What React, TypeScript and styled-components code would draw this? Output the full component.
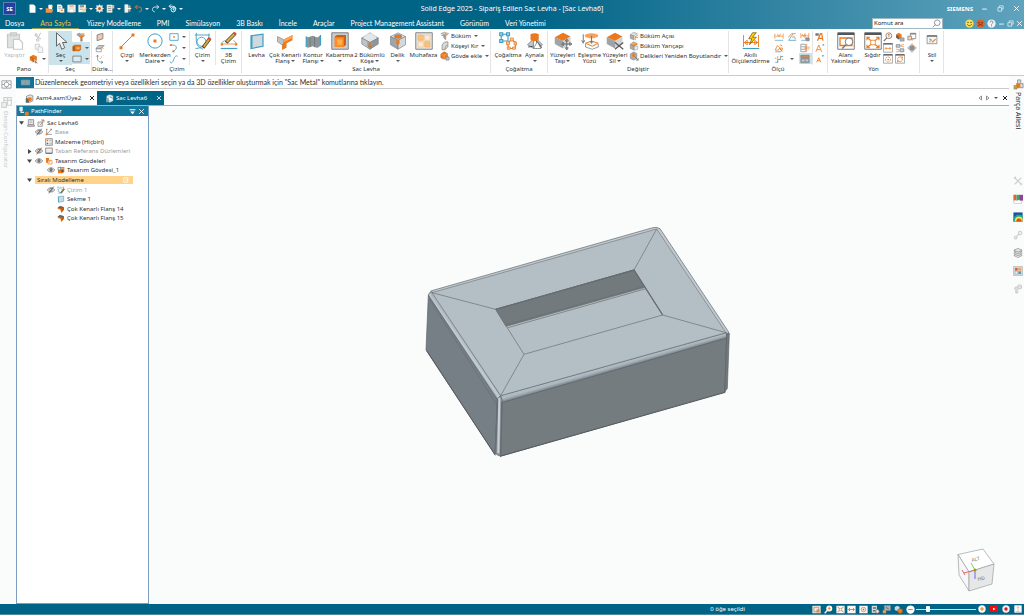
import React from 'react';
import styled, { createGlobalStyle, css } from 'styled-components';

const ink = '#2b2f33';
const teal = '#006487';
const orange = '#ec7a1c';
const sky = '#3d9fc4';
const grey = '#74797d';

const Global = createGlobalStyle`
  *, *::before, *::after { box-sizing: border-box; }
  body { margin: 0; background: #fff; }
  body, button, input { font-family: "Noto Sans", "Open Sans", sans-serif; font-size: 6px; line-height: 8px; color: ${ink}; }
  button { border: 0; padding: 0; background: none; }
  svg { display: block; flex: none; }
  ul { list-style: none; margin: 0; padding: 0; }
`;

/* ---------- icons ---------- */

const icons: Record<string, React.ReactNode> = {
  paste: <g fill="none" stroke="#c6c9cb" strokeWidth="1.6"><path d="M2 3h16v18H2z" fill="#dfe1e2" /><path d="M6 1h8v4H6z" fill="#d5d7d8" /><path d="M10 10h8l4 4v9H10z" fill="#fff" /></g>,
  cut: <g fill="none" stroke="#c6c9cb" strokeWidth="2.5"><path d="M3 8l14 9M16 2L8 17" /><circle cx="5" cy="7" r="2.500" /><circle cx="9" cy="19" r="3" /></g>,
  copy: <g fill="#f4f5f5" stroke="#c6c9cb" strokeWidth="2"><path d="M3 3h10v12H3z" /><path d="M10 9h8l3 3v11H10z" /></g>,
  formatPaint: <g><path d="M2 7l8-5 9 4v9l-8 5-9-5z" fill={orange} /><path d="M2 7l8 4v9" fill="none" stroke="#a34e0c" strokeWidth="1.5" /><path d="M13 13l9 9h-8z" fill="#777" stroke="#fff" /></g>,
  cursor: <path d="M6 1v18l4-4 3 8 4-2-3-7h6z" fill="#f2f3f3" stroke="#5d6468" strokeWidth="1.300" />,
  filter: <g><path d="M4 8h17l-6 6v8h-4v-8z" fill={orange} stroke={grey} /><path d="M2 4l6-2 4 2v5H2z" fill="#9fa4a7" /><path d="M12 3h8v5h-8z" fill="#f3a86a" /></g>,
  selBlock: <g><path d="M2 8l4-3h15v10l-3 4H2z" fill={orange} stroke="#a34e0c" /><path d="M2 8h5v11H2z" fill="#b25a14" /><path d="M11 10h7v5h-7z" fill="#ffb067" /></g>,
  selBox: <path d="M2 5h20v14H2z" fill="#d9eaf0" stroke={grey} strokeWidth="2" />,
  plane1: <path d="M5 7l14-4v13L5 21z" fill="#f0c9ae" stroke={grey} strokeWidth="2" />,
  plane2: <g><path d="M2 13l7-7h13l-7 7z" fill="#c7cbcd" stroke={grey} strokeWidth="1.5" /><path d="M3 14h12v7H3z" fill="#fff" stroke={grey} strokeWidth="1.5" /><path d="M15 9l5 5" stroke={orange} strokeWidth="2" /></g>,
  axes: <g fill="none" stroke={sky} strokeWidth="2"><path d="M6 3v8c0 6 4 9 13 9" /><path d="M3 6l3-3 3 3M15 17l4 3-4 3" stroke={grey} /><path d="M11 12l8-8" strokeDasharray="3 2" stroke={orange} /></g>,
  line: <g><path d="M4 20L20 4" stroke={sky} strokeWidth="1.3" /><path d="M2 19h4v4H2zM18 2h4v4h-4z" fill={orange} /></g>,
  circle: <g><circle cx="12" cy="12" r="9.5" fill="none" stroke={sky} strokeWidth="1.3" /><path d="M10 10h4v4h-4z" fill={orange} /></g>,
  rect: <g><path d="M2 4h20v16H2z" fill="none" stroke={sky} strokeWidth="2" /><path d="M10 10h4v4h-4z" fill={orange} /></g>,
  arc: <g><path d="M4 5c16-2 18 9 6 15" fill="none" stroke={sky} strokeWidth="2" /><path d="M2 3h5v4H2zM8 18h5v4H8z" fill={orange} /></g>,
  spline: <path d="M3 18c0 6 6 4 8-4S18 2 21 6" fill="none" stroke={sky} strokeWidth="2" />,
  sketch: <g fill="none"><path d="M3 1v10c0 7 4 10 9 12M1 4h20M20 2c0 11-7 20-18 20" stroke={sky} strokeWidth="1.2" /><circle cx="10" cy="13" r="6" stroke={sky} strokeWidth="1.2" /><path d="M12 21l9-12" stroke="#4e4437" strokeWidth="4.500" /><path d="M13 20l7-10" stroke="#d9ae3a" strokeWidth="2.500" /><path d="M20 10l2-2" stroke="#dd513c" strokeWidth="4" /></g>,
  sketch3d: <g fill="none"><path d="M2 15l4-4M22 15l-4-4" stroke={grey} /><path d="M3 16h18" stroke={orange} strokeWidth="1" /><path d="M1 22h22" stroke={sky} strokeWidth="1.600" /><path d="M1 15h3v3H1zM20 15h3v3h-3z" fill={orange} /><path d="M8 14L20 2" stroke="#4e4437" strokeWidth="5" /><path d="M9 13L19 3" stroke="#dcb143" strokeWidth="3" /><path d="M19 3l2-2" stroke="#dd513c" strokeWidth="4" /></g>,
  sheet: <g><path d="M4 5l16-2v16L4 22z" fill="#cfd8dc" stroke={sky} strokeWidth="1.6" /><path d="M4 5l2-1v16l-2 2z" fill={sky} /></g>,
  flange: <g><path d="M2 6l8 4 12-6v7l-8 4v6l-6 3v-7L2 13z" fill={orange} /><path d="M2 6l8 4v6l-2 1-6-4z" fill="#bfc4c7" stroke="#7f8487" strokeWidth=".7" /><path d="M10 10l12-6v4l-12 6z" fill="#ffa24f" /></g>,
  contour: <g><path d="M3 6c5 3 7-3 11 0 3 2 5 1 8-2v14c-3 3-5 4-8 2-4-3-6 3-11 0z" fill="#8e9599" /><path d="M3 6v14M22 4v14" stroke={sky} strokeWidth="1.6" /><path d="M8 7v13M14 6v14" stroke="#6b7175" /></g>,
  emboss: <g><path d="M1 1h22v22H1z" fill="#c9cccd" stroke={grey} strokeWidth="1.2" /><path d="M5 6l3-2h12v13l-3 3H5z" fill="#cc6110" /><path d="M5 7h12v13H5z" fill="#ff8d1f" /><path d="M8 10h7v7H8z" fill="#ffae5c" /></g>,
  corner: <g stroke={grey} strokeWidth=".8"><path d="M12 1l11 7-11 6L1 8z" fill="#e4e7e8" /><path d="M1 8l11 6v9L1 16z" fill="#bfc4c7" /><path d="M23 8l-11 6v9l11-7z" fill="#90979b" /><path d="M9 13l3 2 3-2v6l-3 2-3-2z" fill="#fff" /><path d="M10 15h4v5h-4z" fill={orange} /><path d="M4 6l7-4M20 6l-7-4" stroke="#fff" /></g>,
  hole: <g stroke={grey} strokeWidth=".8"><path d="M12 1l10 5-10 5L2 6z" fill="#e4e7e8" /><path d="M2 6l10 5v12L2 17z" fill="#9fa5a8" /><path d="M22 6l-10 5v12l10-6z" fill="#d5d8da" /><ellipse cx="12" cy="6" rx="5" ry="2.6" fill={orange} /><path d="M10 10l2 1 2-1v6l-2 1-2-1z" fill={orange} stroke="none" /></g>,
  housing: <g><path d="M1 1h22v22H1z" fill="#e4e6e7" stroke={grey} strokeWidth="1.2" /><path d="M4 4h7v7H4zM13 13h7v7h-7z" fill="#fbc27d" stroke="#f0b064" /><path d="M13 4h7v7h-7zM4 13h7v7H4z" fill="#ffe9cf" stroke="#eac699" /></g>,
  bend: <g><path d="M2 6l8-3 11 3-7 5z" fill="#c9cdcf" stroke={grey} /><path d="M14 11v10l-5-4V9z" fill="#9fa5a8" stroke={grey} /><path d="M3 10l8 2M12 5l5 6" stroke={orange} strokeWidth="2" /></g>,
  breakCorner: <g><path d="M5 21V10c3-7 7-8 14-8v12l-7 7z" fill="#d8dbdc" stroke={grey} strokeWidth="1.5" /><path d="M12 21c0-8 3-11 7-11" fill="none" stroke={orange} strokeWidth="2" /></g>,
  addBody: <g><path d="M2 7l8-5 8 4v9l-8 5-8-4z" fill={orange} stroke="#a34e0c" /><path d="M2 7l8 4 8-5M10 11v9" fill="none" stroke="#ffc48c" /><path d="M14 14h8v8h-8z" fill="#b9bdbf" stroke="#666" /></g>,
  pattern: <g fill="none" strokeWidth="1.5"><path d="M3 3h9v9H3z" stroke={sky} /><path d="M1 1h4v4H1zM10 1h4v4h-4zM1 10h4v4H1z" fill="#a8d5e5" stroke={sky} /><path d="M17 10l6 5-2 7h-8l-2-7z" stroke={orange} /><path d="M15 8h4v4h-4zM20 13h3v4h-3zM18 20h4v3h-4zM11 20h4v3h-4zM10 13h4v4h-4z" fill="#f9c8a5" stroke={orange} strokeWidth="1" /></g>,
  mirror: <g><path d="M2 17l8-8v13zM22 17l-8-8v13z" fill="#c2c6c8" stroke={grey} /><path d="M6 3c3-2 8-2 11 0v7c-3 3-8 3-11 0z" fill={orange} /><path d="M3 20l6-1M14 12l7 9" stroke="#4d5357" strokeWidth="1.5" /><path d="M10 22l5-9 5 9z" fill="#fff" stroke={grey} /></g>,
  moveFace: <g><path d="M12 1l10 5-10 6L1 7z" fill={orange} /><path d="M1 7l11 5v10L1 16z" fill="#9ea4a7" /><path d="M22 6l-10 6v10l10-6z" fill="#cfd3d5" /><path d="M17 10v13M11 16h12M17 9l-2 3h4zM17 24l-2-3h4zM10 16l3-2v4zM24 16l-3-2v4z" stroke="#555" fill="#fff" /></g>,
  matchFace: <g><ellipse cx="14" cy="5" rx="9" ry="3.5" fill="#f6a15e" /><path d="M6 15l8-3 9 3-8 4z" fill="#f2f3f3" stroke={orange} strokeWidth="1.3" /><path d="M6 16v4l9 3 8-3v-4" fill="none" stroke={grey} /><path d="M3 3v11M1 11l2 4 2-4M14 5v10M12 12l2 3 2-3" stroke="#777" fill="none" strokeWidth="1.300" /></g>,
  deleteFace: <g><path d="M12 1l10 5-10 6L1 7z" fill={orange} /><path d="M1 7l11 5v10L1 16z" fill="#9ea4a7" /><path d="M22 6l-10 6v10l10-6z" fill="#cfd3d5" /><path d="M12 14l11 9M23 14l-11 9" stroke="#555" strokeWidth="1.600" /></g>,
  bendAngle: <g><path d="M3 9l8-6 9 3-8 6z" fill="#dcdfe0" stroke={grey} /><path d="M3 9l9 3v9l-9-3z" fill="#a9aeb1" stroke={grey} /><path d="M22 9c-6 2-8 7-7 13M14 14l8 2" stroke={orange} strokeWidth="2" fill="none" /></g>,
  bendRadius: <g><path d="M3 8l8-6 9 4-8 6z" fill="#f6a763" stroke={grey} /><path d="M3 8l9 4v10l-9-4z" fill="#a9aeb1" stroke={grey} /><path d="M13 13h8v7l-8 2z" fill="#ecedee" stroke={grey} /><path d="M8 12l12-4" stroke={orange} strokeWidth="3" /></g>,
  holeResize: <g><path d="M3 7l8-5 8 4v12l-8 4-8-4z" fill="#a9aeb1" stroke={grey} /><path d="M8 6h6v8H8z" fill={orange} /><path d="M14 14l8 8M17 22h5v-5" stroke="#555" fill="none" strokeWidth="1.500" /></g>,
  smartDim: <g fill="none"><path d="M2 4v16M22 4v16M3 14h18M3 14l4-3v6zM21 14l-4-3v6z" stroke={orange} strokeWidth="1.2" /><path d="M1 22h22" stroke={sky} strokeWidth="1.500" /><path d="M14 1L9 9h4l-3 8 9-10h-5l5-6z" fill="#ffd200" stroke="#70561b" /></g>,
  dim: <g fill="none" stroke={orange} strokeWidth="1.600"><path d="M2 4v12M22 4v12M3 10h18M8 5l4 6 4-7" /><path d="M2 20h20" stroke={sky} /></g>,
  dimAngle: <g fill="none" strokeWidth="1.800"><path d="M14 5L4 20h18" stroke={sky} /><path d="M3 13l8-9h10M16 10c3 2 4 5 4 8M12 12h6" stroke={orange} /></g>,
  dimChain: <g fill="none" strokeWidth="1.600"><path d="M2 3v12M12 3v12M21 3v10M3 9h18M5 5l4 6 3-6" stroke={orange} /><path d="M3 20h10" stroke={sky} /><path d="M14 14h8v7h-8z" fill="#999" stroke={grey} /></g>,
  dimSym: <g fill="none" strokeWidth="1.800"><path d="M3 17l5-11 6 5-3 6zM14 4l6 3" stroke={orange} /><path d="M3 21h15M13 13l7 7" stroke={sky} /><path d="M16 12h4v5h-4z" stroke={orange} /></g>,
  dimCoord: <g fill="none" strokeWidth="1.800"><path d="M3 20h6v-7h7V6h6" stroke={sky} /><path d="M2 10h7M9 5v17M13 13h9M16 4v6" stroke={orange} strokeDasharray="4 2" /></g>,
  dimAlign: <g fill="none" strokeWidth="1.600"><path d="M2 3h12v18H2zM3 9h10M3 15h10" stroke={grey} /><path d="M16 3v18M19 8l4 4-4 4M10 12h10" stroke={orange} /></g>,
  dimAuto: <g fill="#a3a8ab" stroke={grey} strokeWidth="1.600"><path d="M2 3h20v6H2z" fill="#cf8a5c" /><path d="M2 11h20v10H2z" /><path d="M5 15h4M15 15h4" stroke="#fff" /><path d="M12 18h3" stroke={orange} /></g>,
  fontA: <g><path d="M1 3h8v6H1z" fill="#777" /><path d="M6 21L13 4h3l3 17M9 15h9" fill="none" stroke={orange} strokeWidth="3" /></g>,
  fontUp: <g><path d="M2 21L9 5l7 16M5 16h8" fill="none" stroke={orange} strokeWidth="2" /><path d="M17 6l3-4 3 4z" fill={sky} /></g>,
  fontDown: <g><path d="M4 20L9 9l5 11M6 16h6" fill="none" stroke={orange} strokeWidth="2" /><path d="M16 3l3 4 3-4z" fill={sky} /></g>,
  zoomArea: <g fill="none"><path d="M1 1h22v22H1z" stroke={grey} fill="#fff" strokeWidth="1.3" /><path d="M1 1h22v3H1z" fill="#505659" /><path d="M4 8h16v10H4z" stroke={orange} strokeWidth="1.800" /><circle cx="16" cy="13" r="5" fill="#fff" stroke={grey} strokeWidth="1.3" /><path d="M12 17l-5 5" stroke={grey} strokeWidth="2" /></g>,
  fit: <g fill="none"><path d="M1 1h22v22H1z" stroke={grey} fill="#fff" strokeWidth="1.3" /><path d="M1 1h22v3H1z" fill="#505659" /><path d="M4 7l16 14M20 7L4 21M4 11V7h4M16 7h4v4M20 17v4h-4M8 21H4v-4" stroke={orange} strokeWidth="1.500" /><path d="M9 11h6v6H9z" stroke={orange} fill="#fff" /></g>,
  zoom: <g fill="#fff"><circle cx="14" cy="9" r="7" stroke={grey} strokeWidth="2" /><path d="M9 14l-7 8" stroke={grey} strokeWidth="3" /><path d="M14 5v8M12 8l2-3 2 3" stroke={orange} fill="none" strokeWidth="2" /></g>,
  orbit: <g><path d="M3 6l6-4 7 4v8l-7 4-6-4z" fill={orange} /><path d="M3 6l6 4v8l-6-4z" fill="#5a6063" /><path d="M12 14h10v8H12z" fill="#aaafb2" stroke={grey} /></g>,
  views: <g><path d="M8 3h13v13H8z" fill="#fff" stroke={grey} strokeWidth="1.600" /><path d="M8 3h13v3H8z" fill={grey} /><path d="M2 10h9v9H2z" fill="#fbd4b2" stroke={grey} strokeWidth="1.600" /><path d="M12 20l6-5" stroke={orange} strokeWidth="2" /></g>,
  pan: <g fill="none" strokeWidth="1.800"><path d="M1 2h22v20H1z" stroke="#8b9093" fill="#fff" /><path d="M1 2h22" stroke="#505659" strokeWidth="3" /><path d="M5 13h14M8 10l-3 3 3 3M16 10l3 3-3 3" stroke={orange} /></g>,
  spin: <g fill="none" strokeWidth="1.800"><path d="M3 4h9v6H3zM12 14h9v7h-9z" fill="#d5d8da" stroke={grey} /><path d="M21 4c-9 0-9 5 0 5M3 15c10 0 10 6 0 6" stroke={orange} /></g>,
  look: <g fill="#c9cdcf" stroke="#8b9093"><path d="M12 1l4 5H8zM12 23l4-5H8zM1 12l5-4v8zM23 12l-5-4v8z" /><path d="M7 7h10v10H7z" fill="#8d9397" /><path d="M12 8h4v4h-4z" fill={orange} /></g>,
  winTarget: <g fill="none" strokeWidth="1.800"><path d="M1 2h22v20H1z" stroke="#8b9093" fill="#fff" /><path d="M1 2h22" stroke="#505659" strokeWidth="3" /><circle cx="12" cy="13" r="6" stroke={orange} strokeDasharray="5 2" /><path d="M11 12h3v3h-3z" fill={orange} /></g>,
  winRefresh: <g fill="none" strokeWidth="1.800"><path d="M1 2h22v20H1z" stroke="#8b9093" fill="#fff" /><path d="M1 2h22" stroke="#505659" strokeWidth="3" /><path d="M6 13c0-6 8-8 12-4M18 12c0 7-8 8-12 4M18 6v4h-4M6 20v-4h4" stroke={orange} /></g>,
  style: <g fill="none" strokeWidth="1.5"><path d="M1 3h22v18H1z" fill="#f3f4f4" stroke={grey} /><path d="M1 4h22" stroke="#666" strokeWidth="3" /><path d="M6 10l5 3-5 4" stroke="#555" /><path d="M12 18l8-7" stroke={orange} strokeWidth="2.5" /></g>,

  docNew: <path d="M4 1h11l5 5v17H4z" fill="#fff" />,
  open: <g><path d="M9 2h10v12H9z" fill="#fff" /><path d="M2 11h8l3 3h9l-3 9H2z" fill="#f6914a" /><path d="M14 7l7-4-1 7" fill="#ffc69b" /></g>,
  page: <g><path d="M3 1h10l4 4v16H3z" fill="#fff" /><path d="M6 7h8M6 11h6" stroke="#888" strokeWidth="2" /><path d="M10 12h12v11H10z" fill="#fff" stroke="#a58c78" /><path d="M13 15h5v4h-5z" fill={orange} /></g>,
  save: <g><path d="M1 2h22v20H1z" fill="#f4efe9" /><path d="M6 2h12v7H6z" fill="#eebf99" /><path d="M6 13h12v9H6z" fill="#fff" stroke="#b9a797" /></g>,
  saveAs: <g><path d="M1 2h20v20H1z" fill="#f4efe9" /><path d="M5 3h11v6H5z" fill="#9c9287" /><path d="M5 14h9" stroke="#9c9287" strokeWidth="2" /><path d="M13 21l9-11" stroke="#ffc46a" strokeWidth="4" /></g>,
  gear: <g><circle cx="12" cy="12" r="6" fill="none" stroke="#fbe9da" strokeWidth="5" /><path d="M12 1v22M1 12h22M4 4l16 16M20 4L4 20" stroke="#fbe9da" strokeWidth="3" /><circle cx="12" cy="12" r="4" fill="#a7622e" /></g>,
  sheetList: <g><path d="M2 2h15v21H2z" fill="#efeae4" /><path d="M5 7h9M5 12h9M5 17h9" stroke="#8b8177" strokeWidth="2" /><path d="M16 3h6v9h-6z" fill="#d9bfa8" /></g>,
  exit: <g><path d="M4 1h10v22H4z" fill="#f4efe9" /><path d="M14 4h6v16h-6z" fill="#bba999" /><path d="M10 12h12" stroke="#fff" strokeWidth="3" /></g>,
  undo: <path d="M9 3L3 8l6 5M4 8h9c10 0 9 12 1 13" fill="none" stroke="#a8703f" strokeWidth="3" />,
  redo: <path d="M15 3l6 5-6 5M20 8h-9c-10 0-9 12-1 13" fill="none" stroke="#d9e9ef" strokeWidth="2.500" />,
  history: <g fill="none" stroke="#f0f7fa" strokeWidth="2.5"><path d="M8 1L3 6l5 5M4 6h8c6 0 9 3 9 8" /><circle cx="14" cy="15" r="6" /><path d="M14 11v5h4" /></g>,
  minimize: <path d="M4 14h16" stroke="#fff" strokeWidth="3" />,
  restore: <g fill="none" stroke="#fff" strokeWidth="2.2"><path d="M8 8V3h13v11h-5" /><path d="M3 9h13v12H3z" /></g>,
  closeW: <path d="M4 4l16 16M20 4L4 20" stroke="#fff" strokeWidth="3" />,
  closeD: <path d="M4 4l16 16M20 4L4 20" stroke="#222" strokeWidth="4" />,
  search: <g fill="none" stroke="#777" strokeWidth="2"><circle cx="14" cy="10" r="7.5" /><path d="M9 15l-7 7" /></g>,
  smile: <g><circle cx="12" cy="12" r="11" fill="#f8dc55" /><circle cx="8" cy="9" r="1.8" fill="#58470e" /><circle cx="16" cy="9" r="1.8" fill="#58470e" /><path d="M6 14c3 5 9 5 12 0" fill="none" stroke="#58470e" strokeWidth="2" /></g>,
  frown: <g><circle cx="12" cy="12" r="11" fill="#d9632f" /><circle cx="8" cy="10" r="1.8" fill="#4e1b08" /><circle cx="16" cy="10" r="1.8" fill="#4e1b08" /><path d="M6 18c3-4 9-4 12 0" fill="none" stroke="#4e1b08" strokeWidth="2" /></g>,
  help: <g><circle cx="12" cy="12" r="11" fill="#eef4f6" /><path d="M8 9c0-5 8-5 8 0 0 3-4 3-4 6M12 17v3" fill="none" stroke="#6a8c9a" strokeWidth="2.5" /></g>,

  keyboard: <g><path d="M2 6h20v12H2z" fill="#7c9aa5" /><path d="M4 9h16M4 12h16M4 15h16" stroke="#aac0c8" strokeDasharray="2 1" /></g>,
  asm: <g><path d="M4 6l10-4 7 3v13l-8 4-9-3z" fill="#e9eaeb" stroke="#555" strokeWidth="1.5" /><path d="M2 11h6l3 3v9H2z" fill="#666" /><path d="M9 8h9v9l-6 2H9z" fill={orange} /><path d="M10 8l8-1v5z" fill="#ffbf7c" /></g>,
  part: <g><path d="M5 5l8-3 8 3v13l-8 4-8-4z" fill="#d5e2e7" stroke="#fff" /><path d="M3 11h8v11H3z" fill="#7fa2b0" /><path d="M10 9h8v7h-8z" fill="#fff" /><path d="M13 8l7 3" stroke="#4c7585" strokeWidth="2" /></g>,
  pathfinder: <g><path d="M1 2h8v10H1z" fill="#e5ecef" /><path d="M5 12v3h7" stroke="#e5ecef" strokeWidth="3" fill="none" /><path d="M14 14h9v9h-9z" fill={orange} /></g>,
  pin: <g fill="#fff"><path d="M2 4h20v4H2zM4 12h16l-8 9z" /></g>,
  calc: <g fill="#fff" stroke="#666" strokeWidth="2"><path d="M4 2h16v14H4zM2 18h20v4H2z" /><path d="M7 6h10M7 10h10" strokeWidth="1.5" /></g>,
  sheetPart: <g fill="none" stroke="#777" strokeWidth="2"><path d="M3 9h13v13H3z" fill="#f5f5f5" /><path d="M12 3h9v7M8 14l3 3 8-12" /><path d="M16 5l4-2" stroke={orange} strokeWidth="3" /></g>,
  eye: <g fill="none" stroke="#555" strokeWidth="2"><path d="M1 12c6-9 16-9 22 0-6 8-16 8-22 0z" /><circle cx="12" cy="11.5" r="4" fill="#888" /></g>,
  eyeOff: <g fill="none" stroke="#555" strokeWidth="2"><path d="M1 12c6-9 16-9 22 0-6 8-16 8-22 0z" /><circle cx="12" cy="11.5" r="4" /><path d="M5 22L20 2" strokeWidth="2.5" /></g>,
  base: <g fill="none" stroke="#777" strokeWidth="2"><path d="M5 3v16h16M5 19L19 4" /><path d="M2 17h5v5H2zM16 2h5v5h-5zM3 2h4v4H3z" fill={orange} stroke="none" /></g>,
  material: <g><path d="M2 2h20v20H2z" fill="#fff" stroke="#666" strokeWidth="2" /><path d="M5 5h5v5H5z" fill={orange} /><path d="M5 14h5v5H5z" fill="#666" /><path d="M13 6h7M13 9h7M13 15h7M13 18h7" stroke="#777" strokeWidth="1.5" /></g>,
  refPlane: <g><path d="M2 3h20v15H2z" fill="#eee" stroke="#666" strokeWidth="2" /><path d="M2 18h20v3H2z" fill="#777" /></g>,
  bodies: <g><path d="M3 3h9v6h6v8H3z" fill={orange} /><path d="M9 10h12v11H9z" fill="#fff" stroke={orange} strokeWidth="2" /><path d="M11 12h5v5h-5z" fill="#f6a763" /></g>,
  body: <g><path d="M3 6l5-3h14v14l-4 5H3z" fill={orange} /><path d="M3 4h8v8H3z" fill="#fff" stroke="#45758b" strokeWidth="2" /><path d="M13 12h6v6h-6z" fill="#4e545a" /><path d="M12 5h8v4h-8z" fill="#f6a763" /></g>,
  flangeDark: <g><path d="M2 8l7-5 12 4v7l-8 9-3-9-8-2z" fill={orange} /><path d="M2 8l7-5 12 4-8 4z" fill="#5f6467" /><path d="M13 11l8-4v7l-8 9z" fill="#c8590b" /></g>,

  tools: <g fill="none" stroke="#cdd0d1" strokeWidth="3"><path d="M4 4l16 16M20 4L4 20" /><path d="M2 6l5-4M18 22l4-4" /></g>,
  weather: <g><path d="M0 2h8v14H0z" fill="#f3a43f" /><path d="M3 2h4v14H3z" fill="#e4572e" /><path d="M8 2h8v14H8z" fill="#4d9e69" /><path d="M15 2h9v14h-9z" fill="#8a4695" /><path d="M1 21c0-6 6-8 8-5 4-4 11-1 10 3 4 1 2 4 0 4H5z" fill="#fff" stroke="#999" /></g>,
  rainbow: <g><path d="M1 1h22v22H1z" fill="#15549a" /><path d="M1 23C1 6 12 3 23 8v15z" fill="#15a8a0" /><path d="M4 23c0-14 15-16 19-7v7z" fill="#f5e134" /><path d="M8 23c0-10 12-10 13 0z" fill="#e4462b" /></g>,
  wrench: <g fill="none" stroke="#cdd0d1" strokeWidth="3"><path d="M8 16l7-7" /><circle cx="17" cy="7" r="4" /><circle cx="6" cy="18" r="3" /></g>,
  layers: <g fill="#e2e4e5" stroke="#777" strokeWidth="1.3"><path d="M12 13l10 5-10 5-10-5z" /><path d="M12 9l10 4.500-10 5-10-5z" /><path d="M12 5l10 4-10 5L2 9z" /><path d="M12 1l10 4-10 5L2 5z" /></g>,
  palette: <g><path d="M1 1h22v22H1z" fill="#cfd2d4" stroke="#999" /><path d="M5 5h6v6H5z" fill="#e4572e" /><path d="M13 5h6v6h-6z" fill="#f2a53a" /><path d="M5 13h6v6H5z" fill="#eee" stroke="#999" /><path d="M13 13h6v6h-6z" fill="#3e9dc9" /></g>,
  gears: <g fill="#e0e2e3" stroke="#c2c5c6" strokeWidth="2"><circle cx="16" cy="7" r="5" /><circle cx="8" cy="11" r="4" /><circle cx="9" cy="19" r="3" /></g>,
  family: <g><path d="M10 2h7v8h5v9H10z" fill="#ddd" stroke="#777" strokeWidth="1.500" /><path d="M7 9h9v10H7z" fill={orange} /><path d="M2 14h7v8H2z" fill="#c9a03c" stroke="#777" /></g>,
  config: <g fill="none" stroke="#9b9fa1" strokeWidth="2"><path d="M2 4h20v16H2zM2 12h20M12 4v16" /><circle cx="12" cy="12" r="5" fill="#fff" /></g>,
  configPale: <g fill="none" stroke="#cfd2d3" strokeWidth="2"><path d="M7 3h14v14H7zM7 8h14M14 3v14" /><path d="M3 12h9v9H3z" fill="#eee" /></g>,

  sFrame: <g><path d="M1 2h22v20H1z" fill="#f7e6d9" /><path d="M5 6h13v12H5z" fill="none" stroke="#9a8b80" strokeWidth="2" /><path d="M12 12h8v8h-8z" fill="#d9895a" /></g>,
  sZoom: <g fill="#fff"><circle cx="14" cy="9" r="8" /><path d="M9 14l-7 8" stroke="#f7e6d9" strokeWidth="4" /><path d="M14 4v10M10 9h8" stroke={orange} strokeWidth="2" /></g>,
  sFit: <g><path d="M1 2h22v20H1z" fill="#fdf6f0" /><path d="M4 5l16 14M20 5L4 19" stroke={orange} strokeWidth="2.5" /><path d="M9 9h6v6H9z" fill="#fff" stroke={grey} /></g>,
  sPan: <g><path d="M1 2h22v20H1z" fill="#fdf6f0" /><path d="M4 12h16M8 8l-4 4 4 4M16 8l4 4-4 4" stroke={orange} strokeWidth="2.500" fill="none" /></g>,
  sSpin: <g><path d="M1 2h22v20H1z" fill="#fdf6f0" /><circle cx="12" cy="12" r="6" fill="none" stroke={orange} strokeWidth="2" /><path d="M10 10h4v4h-4z" fill={grey} /></g>,
  sCube: <g><path d="M2 2h14v19H2z" fill="#d8dee0" /><path d="M5 6h9v4H5zM5 13h6v4H5z" fill="#58707b" /><circle cx="17" cy="17" r="5" fill="#f0e4da" stroke="#666" strokeWidth="2" /></g>,
  sBrush: <g><path d="M6 1h17v14H6z" fill="#a9b3b8" stroke="#777" /><path d="M2 14h9v8H2z" fill="#e59a56" /><path d="M10 6l8 5" stroke="#777" strokeWidth="3" /></g>,
  sBlocks: <g><path d="M2 5l7-3 6 3v8l-6 3-7-3z" fill="#bfe0ea" /><path d="M10 12l6-3 7 3v7l-7 4-6-4z" fill={orange} stroke="#77431b" /></g>,
  sMinus: <g><circle cx="12" cy="12" r="11" fill="#fff" /><path d="M6 12h12" stroke={orange} strokeWidth="3" /></g>,
  sPlus: <g><circle cx="12" cy="12" r="11" fill="#fff" /><path d="M6 12h12M12 6v12" stroke={orange} strokeWidth="3" /></g>,
  youtube: <g><path d="M0 3h24v18H0z" fill="#f00d0d" /><path d="M9 8l8 4-8 4z" fill="#fff" /></g>,
  record: <g><circle cx="12" cy="12" r="11" fill="#f2eeee" /><circle cx="12" cy="12" r="5" fill="#e1121d" /></g>,
  upload: <g><path d="M1 1h22v22H1z" fill="#fff" /><path d="M12 20V5M7 10l5-5 5 5M5 20h14" stroke="#f39a96" strokeWidth="2" fill="none" /></g>,
};

const Icon = ({ name, size = 10 }: { name: string; size?: number }) => (
  <svg width={size} height={size} viewBox="0 0 24 24" aria-hidden="true">{icons[name]}</svg>
);

const Caret = styled.i<{ $light?: boolean }>`
  display: inline-block;
  flex: none;
  width: 4px;
  height: 2px;
  vertical-align: middle;
  border: solid transparent;
  border-width: 2px 2px 0;
  border-top-color: ${(p) => (p.$light ? '#fff' : '#55595c')};
`;

/* ---------- frame ---------- */

const Page = styled.div`
  display: flex;
  flex-direction: column;
  min-height: 100vh;
  overflow: hidden;
`;

const Header = styled.header`
  background: linear-gradient(90deg, ${teal} 0%, ${teal} 52%, #2a7f9e 72%, #5fa3bd 100%);
  color: #fff;
`;

const TitleRow = styled.div`
  display: grid;
  grid-template-columns: 1fr auto 1fr;
  align-items: center;
  height: 17px;
`;

const QuickBar = styled.div`
  display: flex;
  align-items: center;
  padding-left: 3px;
`;

const Logo = styled.span`
  width: 13px;
  height: 13px;
  margin-right: 12px;
  background: #27409b;
  border: 1px solid #5d7fc0;
  color: #fff;
  font-weight: 700;
  line-height: 12px;
  text-align: center;
`;

const QuickButton = styled.button<{ $wide?: boolean }>`
  display: flex;
  align-items: center;
  gap: 2px;
  width: ${(p) => (p.$wide ? 17 : 11)}px;
`;

const DocTitle = styled.h1`
  margin: 0;
  font-size: 7px;
  font-weight: 400;
  line-height: 17px;
`;

const WindowButtons = styled.div`
  display: flex;
  align-items: center;
  justify-content: flex-end;
  gap: 8px;
  padding-right: 4px;
  button + button { margin-left: 1px; }
`;

const Brand = styled.strong`
  font-size: 6px;
`;

const MenuRow = styled.div`
  display: flex;
  justify-content: space-between;
  height: 12px;
`;

const Menu = styled.nav`
  display: flex;
`;

const MenuItem = styled.a<{ $active?: boolean }>`
  padding: 0 8px;
  font-family: Lato, "Noto Sans", sans-serif;
  font-size: 7px;
  line-height: 13px;
  color: ${(p) => (p.$active ? '#e9c63f' : '#fff')};
  text-decoration: none;
  white-space: nowrap;
  ${(p) => p.$active && css`border-bottom: 1px solid #93a04f;`}
  &:first-child { padding-left: 5px; }
`;

const MenuTools = styled.div`
  display: flex;
  align-items: center;
  gap: 2px;
  padding-right: 1px;
`;

const Search = styled.label`
  display: flex;
  align-items: center;
  width: 71px;
  height: 11px;
  margin-right: 20px;
  padding: 0 1px;
  background: #fff;
  border: 1px solid #9fb9c4;
  input { flex: 1; min-width: 0; border: 0; padding: 0; outline: 0; background: none; }
  input::placeholder { color: #222; opacity: 1; }
`;

/* ---------- ribbon ---------- */

const Ribbon = styled.div`
  display: flex;
  height: 47px;
  padding: 2px 0;
  background: #fff;
  border-bottom: 1px solid #c9cbcc;
`;

const GroupBox = styled.section<{ $w: number }>`
  display: flex;
  flex: none;
  flex-direction: column;
  width: ${(p) => p.$w}px;
  border-right: 1px solid #e2e4e5;
`;

const GroupRow = styled.div`
  display: flex;
  height: 34px;
`;

const GroupLabel = styled.h2`
  margin: 0;
  font-size: 6px;
  font-weight: 400;
  line-height: 8px;
  text-align: center;
  white-space: nowrap;
`;

const Group = ({ w, label, children }: { w: number; label?: string; children: React.ReactNode }) => (
  <GroupBox $w={w}>
    <GroupRow>{children}</GroupRow>
    {label && <GroupLabel>{label}</GroupLabel>}
  </GroupBox>
);

const BigButton = styled.button<{ $w: number; $on?: boolean; $off?: boolean; $edge?: boolean }>`
  display: flex;
  flex: none;
  flex-direction: column;
  align-items: center;
  width: ${(p) => p.$w}px;
  padding-top: 1px;
  gap: 2px;
  line-height: 6px;
  white-space: nowrap;
  background: ${(p) => (p.$on ? '#cbe3ea' : 'none')};
  color: ${(p) => (p.$off ? '#b4b7b9' : ink)};
  border-left: ${(p) => (p.$edge ? '1px solid #e2e4e5' : '0')};
  span { display: flex; flex-direction: column; align-items: center; width: 0; }
  em { display: flex; align-items: center; gap: 1px; height: 6px; font-style: normal; }
`;

const Big = ({ icon, lines, w, caret, on, off, edge }: { icon: string; lines: string[]; w: number; caret?: boolean; on?: boolean; off?: boolean; edge?: boolean }) => (
  <BigButton $w={w} $on={on} $off={off} $edge={edge}>
    <Icon name={icon} size={18} />
    <span>
      <em>{lines[0]}</em>
      {(lines[1] || caret) && <em>{lines[1]}{caret && <Caret />}</em>}
    </span>
  </BigButton>
);

const Stack = styled.div<{ $cols?: number; $w: number; $edge?: boolean }>`
  display: grid;
  flex: none;
  grid-template-columns: repeat(${(p) => p.$cols ?? 1}, 1fr);
  grid-auto-rows: 11px;
  width: ${(p) => p.$w}px;
  border-left: ${(p) => (p.$edge ? '1px solid #e2e4e5' : '0')};
`;

const SmallButton = styled.button<{ $on?: boolean; $start?: boolean }>`
  display: flex;
  align-items: center;
  justify-content: ${(p) => (p.$start ? 'flex-start' : 'center')};
  gap: 1px;
  white-space: nowrap;
  background: ${(p) => (p.$on ? '#cbe3ea' : 'none')};
  i { margin-left: 2px; }
`;

const TextStack = styled.div`
  display: flex;
  flex-direction: column;
  flex: none;
  padding-left: 1px;
  button { height: 10px; }
`;

const CaretCell = styled.button`
  display: grid;
  place-items: center;
`;

const Small = ({ icon, text, caret, on, label }: { icon: string; text?: string; caret?: boolean; on?: boolean; label?: string }) => (
  <SmallButton $on={on} $start={!!text || caret} aria-label={text ?? label ?? icon}>
    <Icon name={icon} size={10} />
    {text}
    {caret && <Caret />}
  </SmallButton>
);

/* ---------- work area ---------- */

const Body = styled.div`
  display: grid;
  flex: 1;
  grid-template-columns: 16px minmax(0, 1fr) 15px;
`;

const Rail = styled.aside<{ $right?: boolean }>`
  display: flex;
  flex-direction: column;
  align-items: ${(p) => (p.$right ? 'flex-end' : 'flex-start')};
  background: #fafcfc;
`;

const RailTab = styled.button<{ $pale?: boolean }>`
  display: flex;
  flex-direction: column;
  align-items: center;
  gap: 2px;
  width: 12px;
  margin-top: 3px;
  color: ${(p) => (p.$pale ? '#c6c9ca' : ink)};
  span { writing-mode: vertical-rl; white-space: nowrap; font-size: ${(p) => (p.$pale ? 6 : 7)}px; }
  & + & { margin-top: 6px; }
`;

const RailButtons = styled.div<{ $top: number }>`
  display: flex;
  flex-direction: column;
  gap: 8px;
  margin-top: ${(p) => p.$top}px;
  padding-right: 1px;
`;

const Center = styled.main`
  display: flex;
  flex-direction: column;
`;

const Prompt = styled.div`
  display: flex;
  align-items: center;
  gap: 1px;
  height: 13px;
  border-bottom: 1px solid #c9cbcc;
  background: #fff;
  p { margin: 0; font-family: Lato, "Noto Sans", sans-serif; font-size: 7px; }
`;

const PromptBadge = styled.span`
  display: flex;
  justify-content: center;
  width: 18px;
  background: #0c7397;
`;

const Tabs = styled.div`
  display: flex;
  align-items: flex-end;
  height: 17px;
  padding-left: 6px;
  border-bottom: 1px solid #8cb7c7;
`;

const Tab = styled.button<{ $active?: boolean; $w: number }>`
  display: flex;
  align-items: center;
  gap: 2px;
  width: ${(p) => p.$w}px;
  height: 14px;
  padding: 0 2px 0 ${(p) => (p.$active ? 8 : 3)}px;
  color: ${(p) => (p.$active ? '#fff' : ink)};
  background: ${(p) => (p.$active ? teal : '#fff')};
  svg:last-child { margin-left: auto; }
`;

const TabNav = styled.div`
  display: flex;
  align-items: center;
  gap: 4px;
  height: 15px;
  margin-left: auto;
  padding-right: 1px;
`;

const Work = styled.div`
  display: grid;
  flex: 1;
  grid-template-columns: 133px minmax(0, 1fr);
`;

const Panel = styled.section`
  background: #fff;
  border: 1px solid #7c9cc0;
  border-top: 0;
`;

const PanelHead = styled.div`
  display: flex;
  align-items: center;
  gap: 2px;
  height: 10px;
  padding: 0 3px 0 2px;
  background: #13799c;
  color: #fff;
  h2 { flex: 1; margin: 0; font-size: 6px; font-weight: 400; }
`;

const Tree = styled.ul`
  display: grid;
  grid-auto-rows: 1fr;
  height: 105px;
  margin-top: 2px;
`;

const TreeRow = styled.li<{ $indent: number; $dim?: boolean }>`
  display: flex;
  align-items: center;
  gap: 2px;
  padding-left: ${(p) => p.$indent}px;
  white-space: nowrap;
  color: ${(p) => (p.$dim ? '#9a9da0' : ink)};
  mark { display: flex; justify-content: space-between; align-items: center; width: 98px; height: 8px; padding: 0 4px 0 2px; background: #ffd38a; color: ${ink}; }
`;

const Twist = styled.i<{ $open?: boolean }>`
  flex: none;
  width: 5px;
  height: 5px;
  margin-right: 1px;
  background: #444;
  clip-path: ${(p) => (p.$open ? 'polygon(0 20%, 100% 20%, 50% 90%)' : 'polygon(20% 0, 90% 50%, 20% 100%)')};
`;

const View = styled.div`
  position: relative;
  background: #fafcfc;
  min-height: 240px;
`;

const Scene = styled.svg`
  position: absolute;
  inset: 0;
  width: 100%;
  height: 100%;
`;

const CubeSpot = styled.div`
  position: absolute;
  right: 14px;
  bottom: 12px;
`;

const Status = styled.footer`
  display: flex;
  align-items: center;
  justify-content: flex-end;
  height: 11px;
  background: ${teal};
  border-bottom: 1px solid #4d8ba3;
  color: #fff;
`;

const StatusText = styled.span`
  margin-right: 66px;
`;

const StatusIcons = styled.div<{ $w: number; $n: number }>`
  display: grid;
  grid-template-columns: repeat(${(p) => p.$n}, 1fr);
  justify-items: center;
  width: ${(p) => p.$w}px;
`;

const Zoom = styled.input`
  appearance: none;
  width: 60px;
  height: 9px;
  margin: 0;
  background: linear-gradient(#cfe0e7, #cfe0e7) center / 100% 1px no-repeat;
  &::-webkit-slider-thumb { appearance: none; width: 4px; height: 6px; background: #fff; border-radius: 1px; }
`;

const quick: [string, boolean, string][] = [
  ['docNew', true, 'Yeni'], ['open', false, 'Aç'], ['page', false, 'Sayfa'], ['save', false, 'Kaydet'],
  ['saveAs', true, 'Farklı Kaydet'], ['gear', false, 'Ayarlar'], ['sheetList', true, 'Liste'], ['exit', false, 'Kapat'],
  ['undo', true, 'Geri al'], ['redo', true, 'Yinele'], ['history', true, 'Geçmiş'],
];

const menu = ['Dosya', 'Ana Sayfa', 'Yüzey Modelleme', 'PMI', 'Simülasyon', '3B Baskı', 'İncele', 'Araçlar', 'Project Management Assistant', 'Görünüm', 'Veri Yönetimi'];

type Node = { indent: number; open?: boolean; twist?: boolean; icons: string[]; text: string; dim?: boolean };
const tree: Node[] = [
  { indent: 2, twist: true, open: true, icons: ['calc', 'sheetPart'], text: 'Sac Levha6' },
  { indent: 18, icons: ['eyeOff', 'base'], text: 'Base', dim: true },
  { indent: 28, icons: ['material'], text: 'Malzeme (Hiçbiri)' },
  { indent: 10, twist: true, icons: ['eyeOff', 'refPlane'], text: 'Taban Referans Düzlemleri', dim: true },
  { indent: 10, twist: true, open: true, icons: ['eye', 'bodies'], text: 'Tasarım Gövdeleri' },
  { indent: 30, icons: ['eye', 'body'], text: 'Tasarım Gövdesi_1' },
  { indent: 10, twist: true, open: true, icons: [], text: 'Sıralı Modelleme' },
  { indent: 30, icons: ['eyeOff', 'sketch'], text: 'Çizim 1', dim: true },
  { indent: 40, icons: ['sheet'], text: 'Sekme 1' },
  { indent: 40, icons: ['flangeDark'], text: 'Çok Kenarlı Flanş 14' },
  { indent: 40, icons: ['flangeDark'], text: 'Çok Kenarlı Flanş 15' },
];

const Model = () => (
  <Scene viewBox="-783 -312 2580 1494" aria-label="Sac Levha6">
    <defs>
      <linearGradient id="frontBend" gradientUnits="userSpaceOnUse" x1="600" y1="464" x2="606" y2="485">
        <stop offset="0" stopColor="#b5c0c6" /><stop offset=".45" stopColor="#a9b6be" /><stop offset="1" stopColor="#6f777b" />
      </linearGradient>
      <linearGradient id="leftBend" gradientUnits="userSpaceOnUse" x1="168" y1="402" x2="152" y2="413">
        <stop offset="0" stopColor="#aab5bb" /><stop offset=".5" stopColor="#c3ced6" /><stop offset="1" stopColor="#7b838b" />
      </linearGradient>
    </defs>
    <g stroke="#5c6266" strokeWidth="2" strokeLinejoin="round">
      <path d="M62 243L725 54q14-5 25 2L956 366l-5 10L270 560z" fill="#c0cad0" />
      <path d="M55 255L48 420 255 734 263 566z" fill="#767e86" />
      <path d="M275 572L270 739 945 546 950 382z" fill="#747c7f" />
      <path d="M55 255q2-10 12-9L272 557l-10 12z" fill="url(#leftBend)" />
      <path d="M272 557L950 368v16L275 578z" fill="url(#frontBend)" />
      <path d="M950 372l8-3-6 166-8 11z" fill="#70787c" />
      <path d="M262 566l10-8 5 14-5 166-10-3-7-6z" fill="#8d969b" />
      <path d="M268 563l-3 166" stroke="#c6d1d7" strokeWidth="6" />
      <path d="M66 248L740 57l208 311-676 189z" fill="#b4bfc5" strokeWidth="1.500" />
    </g>
    <g stroke="#666c70" strokeWidth="2" fill="none">
      <path d="M66 248l191 50M740 57l-68 123M948 368l-190-53M272 557l70-124" />
      <path d="M257 298l415-118 86 135-416 118z" fill="#b4bfc5" />
      <path d="M257 298l415-118 33 52-417 117z" fill="#727a7d" />
      <path d="M257 298l415-118 86 135" strokeWidth="4" />
      <path d="M288 345l412-115M294 353l414-117" />
      <path d="M263 570l-6 162M275 575l-3 160" strokeWidth="3" />
      <path d="M50 422l206 314M270 739l676-192" stroke="#54595d" strokeWidth="3" />
      <path d="M58 268l204 318" />
    </g>
  </Scene>
);

const ViewCube = () => (
  <svg width="38" height="44" viewBox="0 0 38 44" aria-label="Görünüm küpü">
    <g stroke="#9b9fa1" strokeWidth=".7" strokeLinejoin="round">
      <path d="M1 6.500L26 1l11 15-25 8z" fill="#fff" />
      <path d="M1 6.500L12 24v19L2 27z" fill="#f6f7f7" />
      <path d="M12 24l25-8-2 20-23 7z" fill="#e6e8e8" />
    </g>
    <text x="15" y="14" fontSize="5" fill="#777" transform="rotate(-14 15 14)">ALT</text>
    <text x="21" y="33" fontSize="5" fill="#777" transform="rotate(-12 21 33)">HĐ</text>
    <path d="M18 22l-11 3M5 22l3 5" stroke="#e06a6a" />
    <path d="M18 22l-4-7" stroke="#62d862" />
    <path d="M18 22v9" stroke="#6a6af0" />
    <circle cx="18" cy="22" r="1.500" fill="#a89a00" />
  </svg>
);

export default function App() {
  return (
    <Page>
      <Global />
      <Header>
        <TitleRow>
          <QuickBar>
            <Logo>SE</Logo>
            {quick.map(([icon, wide, label]) => (
              <QuickButton key={icon} $wide={wide} aria-label={label}>
                <Icon name={icon} size={9} />
                {wide && <Caret $light />}
              </QuickButton>
            ))}
          </QuickBar>
          <DocTitle>Solid Edge 2025 - Sipariş Edilen Sac Levha - [Sac Levha6]</DocTitle>
          <WindowButtons>
            <Brand>SIEMENS</Brand>
            <button aria-label="Küçült"><Icon name="minimize" size={7} /></button>
            <button aria-label="Geri yükle"><Icon name="restore" size={7} /></button>
            <button aria-label="Kapat"><Icon name="closeW" size={7} /></button>
          </WindowButtons>
        </TitleRow>
        <MenuRow>
          <Menu>
            {menu.map((m, i) => <MenuItem key={m} href="#" $active={i === 1}>{m}</MenuItem>)}
          </Menu>
          <MenuTools>
            <Search><input placeholder="Komut ara" aria-label="Komut ara" /><Icon name="search" size={9} /></Search>
            <Icon name="smile" size={9} />
            <Icon name="frown" size={9} />
            <Icon name="help" size={9} />
            <Icon name="minimize" size={7} />
            <Icon name="restore" size={7} />
            <Icon name="closeW" size={7} />
          </MenuTools>
        </MenuRow>
      </Header>

      <Ribbon>
        <Group w={49} label="Pano">
          <Big icon="paste" lines={['Yapıştır']} w={29} off />
          <Stack $w={19}>
            <Small icon="cut" label="Kes" />
            <Small icon="copy" label="Kopyala" />
            <Small icon="formatPaint" caret label="Biçim" />
          </Stack>
        </Group>
        <Group w={43} label="Seç">
          <Big icon="cursor" lines={['Seç']} w={23} caret on />
          <Stack $w={18}>
            <Small icon="filter" label="Filtre" />
            <Small icon="selBlock" caret on label="Gövde seç" />
            <Small icon="selBox" caret on label="Kutu seç" />
          </Stack>
        </Group>
        <Group w={21} label="Düzle...">
          <Stack $w={16}>
            <Small icon="plane1" label="Düzlem" />
            <Small icon="plane2" label="Paralel düzlem" />
            <Small icon="axes" label="Koordinat" />
          </Stack>
        </Group>
        <Group w={129} label="Çizim">
          <Big icon="line" lines={['Çizgi']} w={28} caret />
          <Big icon="circle" lines={['Merkezden', 'Daire']} w={28} caret />
          <Stack $w={20}>
            <Small icon="rect" caret label="Dikdörtgen" />
            <Small icon="arc" caret label="Yay" />
            <Small icon="spline" caret label="Eğri" />
          </Stack>
          <Big icon="sketch" lines={['Çizim']} w={26} caret edge />
          <Big icon="sketch3d" lines={['3B', 'Çizim']} w={26} edge />
        </Group>
        <Group w={249} label="Sac Levha">
          <Big icon="sheet" lines={['Levha']} w={29} />
          <Big icon="flange" lines={['Çok Kenarlı', 'Flanş']} w={28} caret />
          <Big icon="contour" lines={['Kontur', 'Flanşı']} w={28} caret />
          <Big icon="emboss" lines={['Kabartma']} w={25} caret />
          <Big icon="corner" lines={['2 Bükümlü', 'Köşe']} w={35} caret />
          <Big icon="hole" lines={['Delik']} w={21} caret />
          <Big icon="housing" lines={['Muhafaza']} w={31} />
          <TextStack>
            <Small icon="bend" text="Büküm" caret />
            <Small icon="breakCorner" text="Köşeyi Kır" caret />
            <Small icon="addBody" text="Gövde ekle" caret />
          </TextStack>
        </Group>
        <Group w={57} label="Çoğaltma">
          <Big icon="pattern" lines={['Çoğaltma']} w={34} caret />
          <Big icon="mirror" lines={['Aynala']} w={19} caret />
        </Group>
        <Group w={181} label="Değiştir">
          <Big icon="moveFace" lines={['Yüzeyleri', 'Taşı']} w={29} caret />
          <Big icon="matchFace" lines={['Eşleşme', 'Yüzü']} w={25} />
          <Big icon="deleteFace" lines={['Yüzeyleri', 'Sil']} w={26} caret />
          <TextStack>
            <Small icon="bendAngle" text="Büküm Açısı" />
            <Small icon="bendRadius" text="Büküm Yarıçapı" />
            <Small icon="holeResize" text="Delikleri Yeniden Boyutlandır" caret />
          </TextStack>
        </Group>
        <Group w={99} label="Ölçü">
          <Big icon="smartDim" lines={['Akıllı', 'Ölçülendirme']} w={43} />
          <Stack $w={40} $cols={3}>
            <Small icon="dim" label="Mesafe" />
            <Small icon="dimAngle" label="Açı" />
            <Small icon="dimChain" label="Zincir" />
            <Small icon="dimSym" label="Simetrik" />
            <span />
            <Small icon="dimAlign" label="Hizala" />
            <Small icon="dimCoord" label="Koordinat" />
            <CaretCell aria-label="Koordinat seçenekleri"><Caret /></CaretCell>
            <Small icon="dimAuto" on label="Otomatik" />
          </Stack>
          <Stack $w={15} $edge>
            <Small icon="fontA" label="Yazı" />
            <Small icon="fontUp" label="Büyüt" />
            <Small icon="fontDown" label="Küçült" />
          </Stack>
        </Group>
        <Group w={92} label="Yön">
          <Big icon="zoomArea" lines={['Alanı', 'Yakınlaştır']} w={35} />
          <Big icon="fit" lines={['Sığdır']} w={19} />
          <Stack $w={36} $cols={3}>
            <Small icon="zoom" label="Yakınlaştır" />
            <Small icon="orbit" label="Döndür" />
            <Small icon="views" label="Görünümler" />
            <Small icon="pan" label="Kaydır" />
            <Small icon="spin" label="Çevir" />
            <Small icon="look" label="Bak" />
            <Small icon="winTarget" label="Hedef" />
            <Small icon="winRefresh" label="Yenile" />
          </Stack>
        </Group>
        <Group w={24}>
          <BigButton $w={24}>
            <svg width="18" height="18" viewBox="-8 -5 40 40" aria-hidden="true">{icons.style}</svg>
            <span><em>Stil</em><em><Caret /></em></span>
          </BigButton>
        </Group>
      </Ribbon>

      <Body>
        <Rail>
          <RailTab $pale aria-label="Yapılandırma"><Icon name="config" size={11} /></RailTab>
          <RailTab $pale><Icon name="configPale" size={13} /><span>Design Configurator</span></RailTab>
        </Rail>
        <Center>
          <Prompt>
            <PromptBadge><Icon name="keyboard" size={11} /></PromptBadge>
            <p>Düzenlenecek geometriyi veya özellikleri seçin ya da 3D özellikler oluşturmak için "Sac Metal" komutlarına tıklayın.</p>
          </Prompt>
          <Tabs>
            <Tab $w={75}><Icon name="asm" size={9} />Asm4.asm!Üye2<Icon name="closeD" size={6} /></Tab>
            <Tab $w={67} $active><Icon name="part" size={9} />Sac Levha6<Icon name="closeW" size={6} /></Tab>
            <TabNav>
              <svg width="4" height="6" viewBox="0 0 4 6"><path d="M3.500 1v4L1 3z" fill="none" stroke="#777" strokeWidth=".8" /></svg>
              <svg width="4" height="6" viewBox="0 0 4 6"><path d="M.5 1v4L3 3z" fill="none" stroke="#777" strokeWidth=".8" /></svg>
              <Caret />
              <Icon name="closeD" size={6} />
            </TabNav>
          </Tabs>
          <Work>
            <Panel>
              <PanelHead>
                <Icon name="pathfinder" size={10} />
                <h2>PathFinder</h2>
                <Icon name="pin" size={7} />
                <Icon name="closeW" size={7} />
              </PanelHead>
              <Tree>
                {tree.map((n) => (
                  <TreeRow key={n.text} $indent={n.indent} $dim={n.dim}>
                    {n.twist && <Twist $open={n.open} />}
                    {n.icons.map((i) => <Icon key={i} name={i} size={8} />)}
                    {n.icons.length ? n.text : (
                      <mark>{n.text}<svg width="6" height="6" viewBox="0 0 24 24"><path d="M3 3h16v18H3zM8 10l5 5 9-12" fill="none" stroke="#fff6e3" strokeWidth="4" /></svg></mark>
                    )}
                  </TreeRow>
                ))}
              </Tree>
            </Panel>
            <View>
              <Model />
              <CubeSpot><ViewCube /></CubeSpot>
            </View>
          </Work>
        </Center>
        <Rail $right>
          <RailTab><Icon name="family" size={11} /><span>Parça Ailesi</span></RailTab>
          <RailButtons $top={47}>
            {['tools', 'weather', 'rainbow', 'wrench', 'layers', 'palette', 'gears'].map((n) => <Icon key={n} name={n} />)}
          </RailButtons>
        </Rail>
      </Body>

      <Status>
        <StatusText>0 öğe seçildi</StatusText>
        <StatusIcons $w={105} $n={9}>
          {['sFrame', 'sZoom', 'sFit', 'sPan', 'sSpin', 'sCube', 'sBrush', 'sBlocks', 'sMinus'].map((n) => <Icon key={n} name={n} size={9} />)}
        </StatusIcons>
        <Zoom type="range" defaultValue={18} aria-label="Yakınlaştırma" />
        <StatusIcons $w={48} $n={4}>
          {['sPlus', 'youtube', 'record', 'upload'].map((n) => <Icon key={n} name={n} size={8} />)}
        </StatusIcons>
      </Status>
    </Page>
  );
}
